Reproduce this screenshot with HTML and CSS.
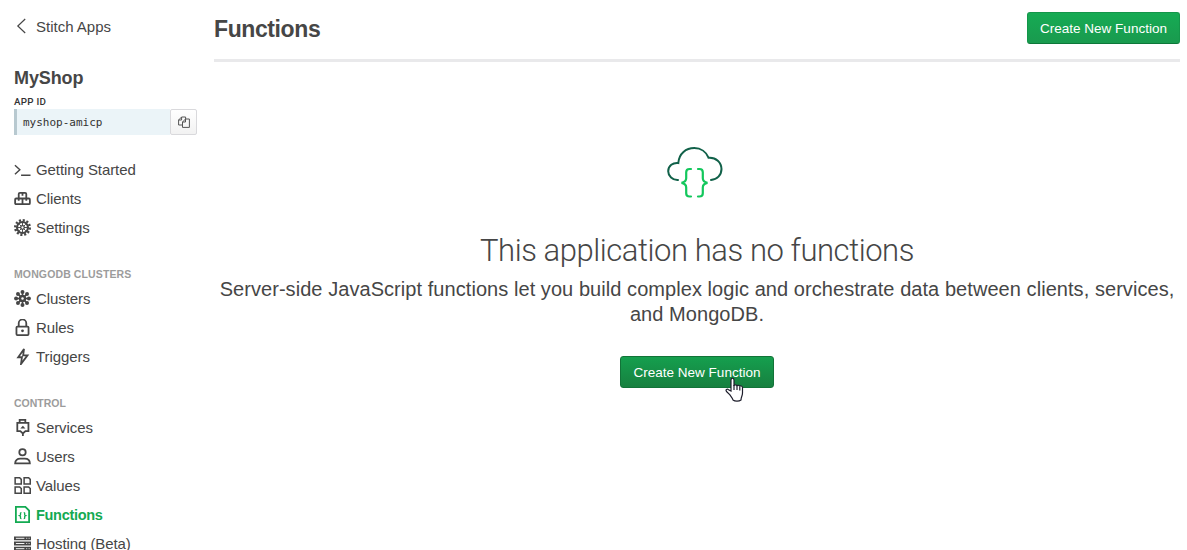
FILE: index.html
```html
<!DOCTYPE html>
<html lang="en">
<head>
<meta charset="utf-8">
<title>Functions</title>
<link rel="stylesheet" href="styles.css">
</head>
<body>
<div class="app">
  <aside class="sidebar">
    <a class="back"><svg class="back-icon" width="10" height="16" viewBox="0 0 10 16"><path d="M9.200 1 1.800 8l7.400 7"/></svg><span>Stitch Apps</span></a>
    <h2 class="app-name">MyShop</h2>
    <div class="id-label">APP ID</div>
    <div class="id-row">
      <code class="id-value">myshop-amicp</code>
      <button class="copy" aria-label="Copy"><svg width="12" height="12" viewBox="0 0 12 12"><path d="M4.500 9H.6V4l3-3h4v2M3.600 1v3h-3M7.500 3h3.900v8.400H4.500V6l3-3zM7.500 3v3h-3"/></svg></button>
    </div>
    <nav class="nav">
      <a class="item"><svg class="icon" viewBox="0 0 18 18"><path class="prompt" d="m1 4.500 5.200 4.800L1 14.100M7.500 15h10"/></svg><span>Getting Started</span></a>
      <a class="item"><svg class="icon" viewBox="0 0 18 18"><path class="line" d="M5 9V4.300q0-1.300 1.300-1.300h5.400q1.300 0 1.300 1.300V9M2.200 9h13.600q1 0 1 1v4q0 1-1 1H2.200q-1 0-1-1v-4q0-1 1-1zM9 9v6M9 3v3M5 9v2.500M13 9v2.500"/></svg><span>Clients</span></a>
      <a class="item"><svg class="icon" viewBox="0 0 18 18"><circle class="teeth" cx="9" cy="9" r="7.700"/><circle class="ring" cx="9" cy="9" r="5.800"/><circle class="fill" cx="9" cy="9" r="2.600"/><path class="thin" d="M9 4v10M4 9h10M5.500 5.500l7 7M12.500 5.500l-7 7"/><circle class="hole" cx="9" cy="9" r="1.200"/></svg><span>Settings</span></a>
    </nav>
    <h3 class="group">MONGODB CLUSTERS</h3>
    <nav class="nav">
      <a class="item"><svg class="icon" viewBox="0 0 18 18"><path class="spokes" d="M9 2v14M2 9h14M4 4l10 10M14 4 4 14"/><g class="fill"><circle cx="9" cy="9" r="4"/><circle cx="9" cy="2.200" r="2.100"/><circle cx="9" cy="15.800" r="2.100"/><circle cx="2.200" cy="9" r="2.100"/><circle cx="15.800" cy="9" r="2.100"/><circle cx="4.200" cy="4.200" r="2.100"/><circle cx="13.800" cy="4.200" r="2.100"/><circle cx="4.200" cy="13.800" r="2.100"/><circle cx="13.800" cy="13.800" r="2.100"/></g><circle class="hole" cx="9" cy="9" r="1.300"/></svg><span>Clusters</span></a>
      <a class="item"><svg class="icon" viewBox="0 0 18 18"><path class="line" d="M5 8V4.500a4 4 0 0 1 8 0V8"/><rect class="line" x="2.600" y="8" width="12.800" height="9" rx="1"/><circle class="fill" cx="9" cy="12.500" r="1.500"/></svg><span>Rules</span></a>
      <a class="item"><svg class="icon" viewBox="0 0 18 18"><path class="line" d="M10.600 1 4.400 9.800h4L7.400 17l6.900-9.200h-4.600z"/></svg><span>Triggers</span></a>
    </nav>
    <h3 class="group">CONTROL</h3>
    <nav class="nav">
      <a class="item"><svg class="icon" viewBox="0 0 18 18"><path class="line" d="M6 4V1h6v3M3.500 4.200h11.800v8.600h-3.200L9.400 15.300l-2.700-2.500H3.500zM9.400 15v3"/><path class="fill" d="m6.700 10 2.700-2.800 2.700 2.800z"/></svg><span>Services</span></a>
      <a class="item"><svg class="icon" viewBox="0 0 18 18"><circle class="line" cx="9" cy="4.500" r="3.400"/><path class="line" d="M1.200 16.300c0-3.200 2.400-5 5.400-5h4.800c3 0 5.400 1.800 5.400 5z"/></svg><span>Users</span></a>
      <a class="item"><svg class="icon" viewBox="0 0 18 18"><path class="tile" d="M1.200.8h4.800L7.700 2.500v5H1.200zM10.700.8h4.800l1.700 1.700v5h-6.500zM1.200 10.500h4.800l1.700 1.700v5H1.200zM10.700 10.500h4.800l1.700 1.700v5h-6.500z"/></svg><span>Values</span></a>
      <a class="item active"><svg class="icon" viewBox="0 0 18 18"><path class="line" d="M2 .9h10l4 3.900v12.300H2z"/><path class="brace" d="M7.900 7c-1.500 0-.9 1.300-1 2.200 0 .6-1 1-1 1s1 .4 1 1c.1.900-.5 2.200 1 2.200M10.300 7c1.500 0 .9 1.300 1 2.200 0 .6 1 1 1 1s-1 .4-1 1c-.1.900.5 2.200-1 2.200"/></svg><span>Functions</span></a>
      <a class="item"><svg class="icon" viewBox="0 0 18 18"><path class="fill" d="M0 1.500h18v4H0zM0 7h18v4H0zM0 12.500h18v4H0z"/><path class="slots" d="M2 3.500h9M2 9h9M2 14.500h9M13 3.500h1M15.500 3.500h1M13 9h1M15.500 9h1M13 14.500h1M15.500 14.500h1"/></svg><span>Hosting (Beta)</span></a>
    </nav>
  </aside>
  <main class="main">
    <header class="header"><h1 class="title">Functions</h1><button class="button">Create New Function</button></header>
    <section class="empty">
      <svg class="cloud" width="56" height="52" viewBox="0 0 56 52"><path class="cloud-line" d="M11 33C5.500 33.300 1.200 29 1.200 24.300c0-5.500 4.800-9 10.100-8.300C12 6.500 19 1.100 27.300 1.100c6.500 0 12 3.800 14.200 9.600C49 10 54.500 15.600 54.500 22c0 6-4.500 10.600-10.500 11"/><path class="cloud-brace" d="M24 22h-1.500c-2.300 0-3.300 1.200-3.300 3.300v6c0 2.800-1.900 4-4.700 4.500 2.900.5 4.700 1.900 4.700 4.700v5.700c0 2.200 1 3.300 3.300 3.300H24M31 22h1.500c2.300 0 3.300 1.200 3.300 3.300v6c0 2.800 1.900 4 4.700 4.500-2.900.5-4.700 1.900-4.700 4.700v5.700c0 2.200-1 3.300-3.300 3.300H31"/></svg>
      <h2 class="empty-title">This application has no functions</h2>
      <p class="empty-text">Server-side JavaScript functions let you build complex logic and orchestrate data between clients, services,<br>and MongoDB.</p>
      <div class="action"><button class="button hover">Create New Function</button>
        <svg class="cursor" width="19" height="25" viewBox="0 0 19 25"><path d="M6 14V3.200C6 .5 9 .5 9 3.200V9c0-1.600 3-1.500 3 .2 0-1.400 2.800-1.200 2.800.5 0-1.200 2.700-1 2.700.8V16c0 3-1.500 4-1.500 7-2 1.500-6 1.500-8 0-.5-2.500-2.300-3.500-3.300-5.500L1.500 14.500c-1.300-2 .8-3 2-1.800z"/><path d="M9 8v5M12 9v4M14.800 10v3.500"/></svg>
      </div>
    </section>
  </main>
</div>
</body>
</html>
```

FILE: styles.css
```css
* { box-sizing: border-box; }
body { margin: 0; background: #fff; color: #464646; font-family: "Liberation Sans", Arial, sans-serif; overflow: hidden; }
h1, h2, h3, p { margin: 0; }
button { font-family: inherit; }
.app { display: grid; grid-template-columns: 197px 966px; column-gap: 17px; height: 550px; overflow: hidden; }
.sidebar { padding-left: 14px; }
.back { display: flex; align-items: center; gap: 10px; padding-left: 2px; margin-top: 16px; height: 20px; font-size: 15px; }
.back-icon { fill: none; stroke: #464646; stroke-width: 1.2; }
.app-name { margin-top: 32px; font-size: 18px; line-height: 20px; letter-spacing: -0.1px; }
.id-label { margin-top: 8px; font: 500 9.8px/12px Roboto, sans-serif; height: 13px; letter-spacing: 0.25px; color: #333; }
.id-row { display: flex; width: 183px; height: 26px; }
.id-value { flex: 1; border-left: 3px solid #b8c9d0; background: #ebf4f8; padding: 1px 0 0 6px; font: 11px/25px "DejaVu Sans Mono", monospace; color: #333; }
.copy { width: 27px; padding: 0; border: 1px solid #d9d9dc; border-radius: 2px; background: linear-gradient(#fff, #f2f2f2); display: grid; place-items: center; }
.copy svg { fill: none; stroke: #555; stroke-width: 1; }
.nav { display: flex; flex-direction: column; }
.id-row + .nav { margin-top: 20px; }
.item { display: flex; align-items: center; gap: 5px; height: 29px; font-size: 15px; letter-spacing: -0.08px; white-space: nowrap; color: #464646; }
.icon { width: 17px; height: 17px; flex: none; color: #464646; }
.line, .tile, .thin, .ring, .teeth, .brace, .spokes, .prompt { fill: none; stroke: currentColor; }
.line { stroke-width: 1.9; }
.prompt { stroke-width: 1.5; }
.tile { stroke-width: 1.6; }
.thin { stroke-width: 1; }
.spokes { stroke-width: 1.6; }
.ring { stroke-width: 2.2; }
.teeth { stroke-width: 2.6; stroke-dasharray: 2.2 1.832; }
.brace { stroke-width: 1.4; }
.fill { fill: currentColor; }
.hole { fill: #fff; }
.slots { stroke: #fff; stroke-width: 1; }
.active, .active .icon { color: #13aa52; }
.active { font-weight: bold; font-size: 14.5px; letter-spacing: -0.3px; }
.group { margin-top: 26px; height: 16px; font-size: 10.5px; line-height: 13px; letter-spacing: 0.12px; color: #9c9c9c; }
.group ~ .group { letter-spacing: 0; }
.header { display: flex; align-items: flex-start; justify-content: space-between; height: 62px; padding-top: 12px; border-bottom: 3px solid #e9e9eb; }
.title { font-size: 23px; line-height: 34px; letter-spacing: -0.4px; }
.button { width: 153px; height: 32px; padding: 1px 0 0; border: 1px solid #14964a; border-bottom-color: #0d7739; border-radius: 3px; background: linear-gradient(#16ab54, #199a4e); color: #fff; font-size: 13.5px; }
.empty { display: flex; flex-direction: column; align-items: center; padding-top: 85px; text-align: center; }
.cloud { margin-right: 5px; fill: none; stroke-width: 2; stroke-linecap: round; }
.cloud-line { stroke: #116149; }
.cloud-brace { stroke: #13c75c; stroke-width: 2.2; }
.empty-title { margin-top: 32px; font: 300 31px/40px Roboto, sans-serif; letter-spacing: -0.44px; white-space: nowrap; }
.empty-text { margin-top: 6px; font-size: 20px; line-height: 25px; letter-spacing: 0.06px; white-space: nowrap; }
.action { position: relative; margin-top: 29px; }
.hover { width: 154px; background: linear-gradient(#159f4e, #17803f); border-color: #127338; }
.cursor { position: absolute; left: 105px; top: 21px; fill: #fff; stroke: #1d1d2b; stroke-width: 1.2; }
```
